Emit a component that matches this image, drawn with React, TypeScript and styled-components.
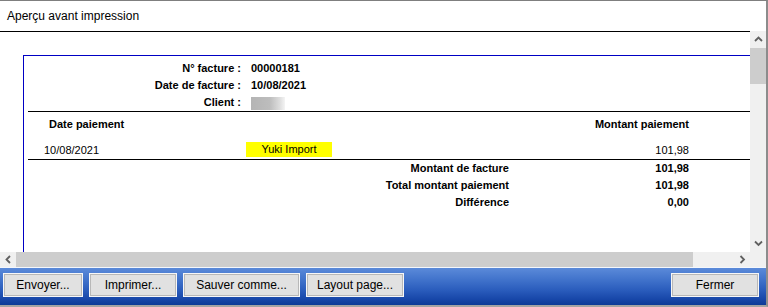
import React from "react";
import styled, { createGlobalStyle } from "styled-components";

const GlobalStyle = createGlobalStyle`
  html, body { margin: 0; padding: 0; background: #fff; overflow: hidden; }
  body { font-family: "Liberation Sans", Arial, sans-serif; color: #000; }
  * { box-sizing: border-box; }
`;

const Window = styled.div`
  width: 768px;
  height: 307px;
  border-top: 1px solid #7f7f7f;
  border-right: 2px solid #8c8c8c;
  border-bottom: 2px solid #a3a3a3;
  display: flex;
  flex-direction: column;
  background: #fff;
  overflow: hidden;
`;

const TitleBar = styled.div`
  height: 30px;
  flex: none;
  display: flex;
  align-items: center;
  padding-left: 7px;
  font-size: 12px;
`;

const Viewport = styled.div`
  display: grid;
  grid-template-columns: 1fr 16px;
  grid-template-rows: 221px 15px;
  flex: none;
`;

const Canvas = styled.div`
  border-top: 1px solid #000;
  overflow: hidden;
  padding: 23px 0 0 23px;
  background: #fff;
`;

const Page = styled.div`
  border-left: 1px solid #0000c4;
  border-top: 1px solid #0000c4;
  height: 300px;
  font-size: 11px;
`;

const HeaderBlock = styled.div`
  display: grid;
  grid-template-columns: 217px auto;
  column-gap: 10px;
  padding-top: 4px;
  line-height: 17px;
  font-weight: bold;
`;

const HeaderLabel = styled.div`
  text-align: right;
  white-space: nowrap;
`;

const HeaderValue = styled.div`
  display: flex;
  align-items: center;
`;

const Blurred = styled.span`
  display: inline-block;
  width: 34px;
  height: 13px;
  margin-top: 1px;
  background: linear-gradient(to right, #b4b4b4 0%, #bdbdbd 55%, #dedede 85%, #f4f4f4 100%);
  filter: blur(0.6px);
`;

const Rule = styled.div`
  margin-left: 4px;
  border-top: 1px solid #000;
`;

const PayGrid = styled.div<{ $head?: boolean }>`
  display: grid;
  grid-template-columns: 20px 202px 86px 357px;
  height: ${(p) => (p.$head ? "30px" : "17px")};
  padding-top: ${(p) => (p.$head ? "4px" : "0")};
  line-height: 17px;
  font-weight: ${(p) => (p.$head ? "bold" : "normal")};
  white-space: nowrap;
`;

const DateCell = styled.div<{ $indent?: number }>`
  grid-column: 2;
  padding-left: ${(p) => p.$indent ?? 0}px;
`;

const Highlight = styled.div`
  grid-column: 3;
  height: 15px;
  line-height: 15px;
  background: #ffff00;
  text-align: center;
`;

const AmountCell = styled.div`
  grid-column: 4;
  text-align: right;
`;

const TotalsGrid = styled.div`
  display: grid;
  grid-template-columns: 485px 180px;
  line-height: 17px;
  font-weight: bold;
  white-space: nowrap;
`;

const TotalLabel = styled.div`
  text-align: right;
`;

const TotalValue = styled.div`
  text-align: right;
`;

const VScroll = styled.div`
  grid-row: 1;
  grid-column: 2;
  display: flex;
  flex-direction: column;
  background: #f0f0f0;
`;

const ArrowBox = styled.div<{ $w?: number; $h?: number }>`
  width: ${(p) => (p.$w ? `${p.$w}px` : "100%")};
  height: ${(p) => (p.$h ? `${p.$h}px` : "100%")};
  flex: none;
  display: flex;
  align-items: center;
  justify-content: center;
  background: #f0f0f0;
`;

const VThumb = styled.div`
  height: 36px;
  flex: none;
  background: #cdcdcd;
`;

const Track = styled.div`
  flex: 1;
  background: #f0f0f0;
`;

const HScroll = styled.div`
  grid-row: 2;
  grid-column: 1;
  display: flex;
  background: #f0f0f0;
`;

const HThumb = styled.div`
  width: 677px;
  flex: none;
  background: #cdcdcd;
`;

const Corner = styled.div`
  grid-row: 2;
  grid-column: 2;
  background: #f0f0f0;
`;

const ButtonBar = styled.div`
  flex: none;
  border-top: 1px solid #f4f7fc;
  height: 38px;
  display: flex;
  align-items: flex-start;
  gap: 6px;
  padding: 5px 7px 0 3px;
  background: linear-gradient(
    to bottom,
    #5b8ad9 0%,
    #4274cc 30%,
    #2a5cbc 60%,
    #1746a8 85%,
    #0d3a96 100%
  );
`;

const Button = styled.button<{ $w: number; $right?: boolean }>`
  width: ${(p) => p.$w}px;
  height: 24px;
  margin-left: ${(p) => (p.$right ? "auto" : "0")};
  border: 1px solid #f7f7f7;
  box-shadow: inset 0 0 0 1px #b8b8b8;
  background: #e1e1e1;
  font-family: "Liberation Sans", Arial, sans-serif;
  font-size: 12px;
  color: #000;
  padding: 0;
  line-height: 20px;
  cursor: default;
`;

const Chevron: React.FC<{ dir: "up" | "down" | "left" | "right" }> = ({ dir }) => {
  const pts: Record<string, string> = {
    up: "1,5 4.5,1.5 8,5",
    down: "1,1.5 4.5,5 8,1.5",
    left: "5,1 1.5,4.5 5,8",
    right: "1.5,1 5,4.5 1.5,8",
  };
  const vertical = dir === "up" || dir === "down";
  return (
    <svg width={vertical ? 9 : 7} height={vertical ? 7 : 9} viewBox={vertical ? "0 0 9 7" : "0 0 7 9"}>
      <polyline points={pts[dir]} fill="none" stroke="#606060" strokeWidth={1.8} />
    </svg>
  );
};

export default function App() {
  return (
    <>
      <GlobalStyle />
      <Window>
        <TitleBar>Aperçu avant impression</TitleBar>
        <Viewport>
          <Canvas>
            <Page>
              <HeaderBlock>
                <HeaderLabel>N° facture :</HeaderLabel>
                <HeaderValue>00000181</HeaderValue>
                <HeaderLabel>Date de facture :</HeaderLabel>
                <HeaderValue>10/08/2021</HeaderValue>
                <HeaderLabel>Client :</HeaderLabel>
                <HeaderValue>
                  <Blurred />
                </HeaderValue>
              </HeaderBlock>
              <Rule />
              <PayGrid $head>
                <DateCell $indent={5}>Date paiement</DateCell>
                <AmountCell>Montant paiement</AmountCell>
              </PayGrid>
              <PayGrid>
                <DateCell>10/08/2021</DateCell>
                <Highlight>Yuki Import</Highlight>
                <AmountCell>101,98</AmountCell>
              </PayGrid>
              <Rule />
              <TotalsGrid>
                <TotalLabel>Montant de facture</TotalLabel>
                <TotalValue>101,98</TotalValue>
                <TotalLabel>Total montant paiement</TotalLabel>
                <TotalValue>101,98</TotalValue>
                <TotalLabel>Différence</TotalLabel>
                <TotalValue>0,00</TotalValue>
              </TotalsGrid>
            </Page>
          </Canvas>
          <VScroll>
            <ArrowBox $h={17}>
              <Chevron dir="up" />
            </ArrowBox>
            <VThumb />
            <Track />
            <ArrowBox $h={17}>
              <Chevron dir="down" />
            </ArrowBox>
          </VScroll>
          <HScroll>
            <ArrowBox $w={16}>
              <Chevron dir="left" />
            </ArrowBox>
            <HThumb />
            <Track />
            <ArrowBox $w={16}>
              <Chevron dir="right" />
            </ArrowBox>
          </HScroll>
          <Corner />
        </Viewport>
        <ButtonBar>
          <Button $w={80}>Envoyer...</Button>
          <Button $w={88}>Imprimer...</Button>
          <Button $w={117}>Sauver comme...</Button>
          <Button $w={98}>Layout page...</Button>
          <Button $w={88} $right>
            Fermer
          </Button>
        </ButtonBar>
      </Window>
    </>
  );
}
